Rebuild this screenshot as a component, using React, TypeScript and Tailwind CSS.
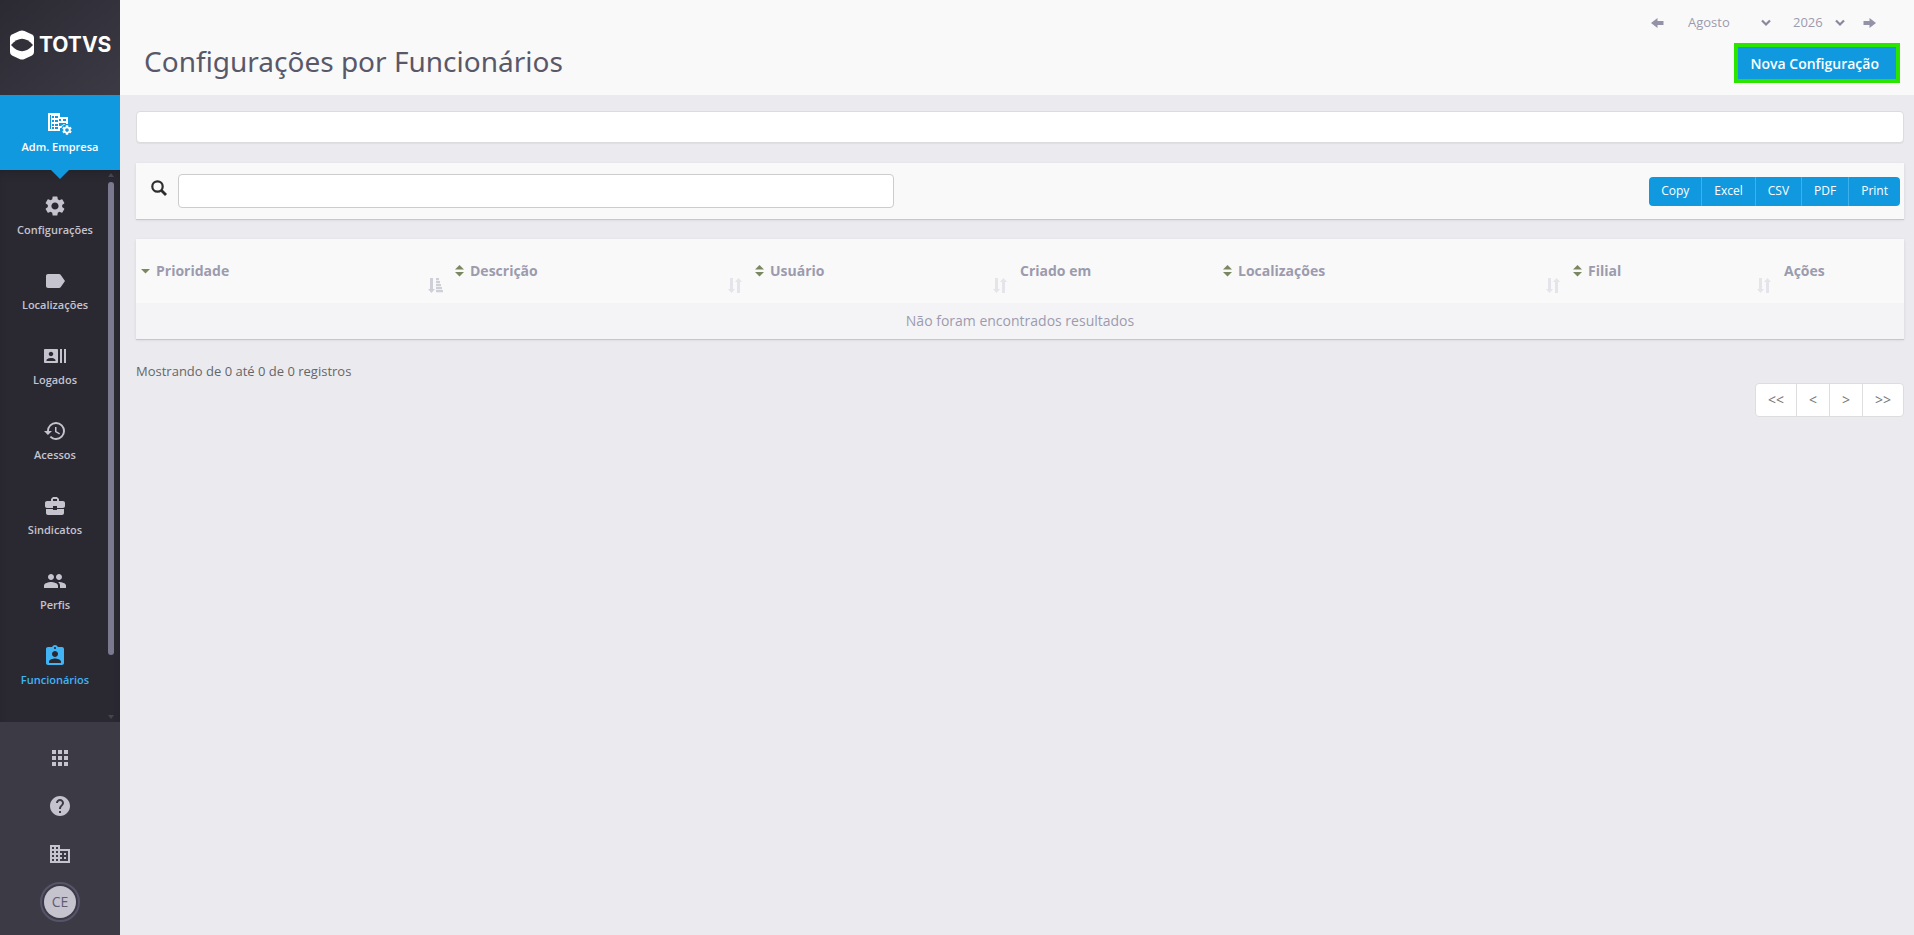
import {
  MdApps,
  MdAssignmentInd,
  MdBusinessCenter,
  MdHelp,
  MdHistory,
  MdLabel,
  MdPeople,
  MdRecentActors,
  MdSettings,
} from "react-icons/md";

const menu = [
  { label: "Configurações", icon: MdSettings },
  { label: "Localizações", icon: MdLabel },
  { label: "Logados", icon: MdRecentActors },
  { label: "Acessos", icon: MdHistory },
  { label: "Sindicatos", icon: MdBusinessCenter },
  { label: "Perfis", icon: MdPeople },
  { label: "Funcionários", icon: MdAssignmentInd, active: true },
];

const columns = [
  { label: "Prioridade", width: "w-[314px]", caret: "down", sort: "asc" },
  { label: "Descrição", width: "w-[300px]", caret: "both", sort: "both" },
  { label: "Usuário", width: "w-[265px]", caret: "both", sort: "both" },
  { label: "Criado em", width: "w-[203px]" },
  { label: "Localizações", width: "w-[350px]", caret: "both", sort: "both" },
  { label: "Filial", width: "w-[211px]", caret: "both", sort: "both" },
  { label: "Ações", width: "w-[125px]" },
];

const exportButtons = ["Copy", "Excel", "CSV", "PDF", "Print"];
const pages = ["<<", "<", ">", ">>"];

function LogoMark() {
  return (
    <svg width="24" height="30" viewBox="0 0 24 30" fill="none">
      <path
        d="M9.5 1Q12 0 14.5 1L22 4.5Q24 5.5 24 7.5V22Q24 24.5 22 25.5L14.5 29Q12 30 9.5 29L2 25.5Q0 24.5 0 22V7.5Q0 5.5 2 4.5Z"
        fill="#fff"
      />
      <path d="M1 15Q12 2.5 23 15Q12 27.5 1 15Z" fill="#32313a" />
    </svg>
  );
}

function CompanySettingsIcon() {
  return (
    <svg width="26" height="24" viewBox="0 0 26 24" fill="#fff">
      <path
        fillRule="evenodd"
        d="M1 2h12v4h8v7h-2l-4 3v1h-2v3H1zM3 4h1v14H3zM5 5h2v2H5zM8 5h3v2H8zM5 9h2v2H5zM8 9h3v2H8zM5 13h2v2H5zM8 13h3v2H8zM5 16h2v2H5zM8 16h3v2H8zM12 8h2v2h-2zM16 8h3v2h-3zM12 12h7v1h-2l-3 2h-2z"
      />
      <circle cx="20" cy="19" r="6" fill="#1199df" />
      <MdSettings x={14} y={13} size={12} />
    </svg>
  );
}

function BuildingIcon() {
  return (
    <svg width="24" height="24" viewBox="0 0 24 24">
      <path
        fillRule="evenodd"
        fill="currentColor"
        d="M2 3h10v4h10v14H2zM4 5h2v2H4zM8 5h2v2H8zM4 9h2v2H4zM8 9h2v2H8zM4 13h2v2H4zM8 13h2v2H8zM4 17h2v2H4zM8 17h2v2H8zM12 9v2h2v2h-2v2h2v2h-2v2h8V9zM16 11h2v2h-2zM16 15h2v2h-2z"
      />
    </svg>
  );
}

function Arrow({ right = false }: { right?: boolean }) {
  return (
    <svg width="13" height="10" viewBox="0 0 13 10" className={right ? "rotate-180" : ""}>
      <path d="M0 5L6.5 0V3H12.5V7H6.5V10Z" fill="#9492a8" />
    </svg>
  );
}

function Chevron() {
  return (
    <svg
      width="10"
      height="8"
      viewBox="0 0 10 8"
      className="pointer-events-none absolute right-0 top-1/2 -translate-y-1/2"
    >
      <path d="M1 1.5L5 5.5L9 1.5" fill="none" stroke="#8a889c" strokeWidth="2.2" />
    </svg>
  );
}

function Caret({ type }: { type: string }) {
  return (
    <svg width="9" height="12" viewBox="0 0 9 12">
      {type === "both" && <path d="M4.5 0L9 4.5H0Z" fill="#7b8760" />}
      {type === "both" ? (
        <path d="M0 7H9L4.5 11.5Z" fill="#7b8760" />
      ) : (
        <path d="M0 4H9L4.5 8.5Z" fill="#7b8760" />
      )}
    </svg>
  );
}

function SortIcon({ type }: { type: string }) {
  return (
    <svg width="15" height="15" viewBox="0 0 15 15" className="absolute bottom-2.5 right-[7px]">
      {type === "asc" ? (
        <path
          d="M2 0h3v11h2L3.5 15L0 11h2zM8 0h3v2.3H8zM8 3h4v2.3H8zM8 6h5v2.3H8zM8 9h6v2.3H8zM8 12h7v2.3H8z"
          fill="#cfcfd8"
        />
      ) : (
        <path d="M2 0h3v11h2L3.500 15L0 11h2zM9 15h3V4h2L10.500 0L7 4h2z" fill="#e4e4ea" />
      )}
    </svg>
  );
}

export default function App() {
  return (
    <div className="flex min-h-screen bg-[#ebebef] font-['Open_Sans',sans-serif] text-[#9c9bae]">
      <aside className="flex w-[120px] shrink-0 flex-col bg-[#3c3b45]">
        <div className="flex h-[95px] items-center gap-[5px] bg-linear-to-br from-[#2b2a33] to-[#3c3b45] pb-1.5 pl-2.5">
          <LogoMark />
          <span className="font-['Inter',sans-serif] text-[21px] font-bold leading-6 text-white">
            TOTVS
          </span>
        </div>

        <a
          href="#empresa"
          className="relative flex h-[75px] flex-col items-center gap-1 bg-[#1199df] pt-4 text-white"
        >
          <CompanySettingsIcon />
          <span className="text-[11px] font-semibold leading-4">Adm. Empresa</span>
          <svg width="18" height="9" viewBox="0 0 18 9" className="absolute top-full z-10">
            <path d="M0 0H18L9 9Z" fill="#1199df" />
          </svg>
        </a>

        <div className="flex flex-1 bg-[#2a2932] shadow-[inset_0_6px_8px_-4px_#22212a]">
          <nav className="flex-1 pt-6">
            {menu.map(({ label, icon: Icon, active }) => (
              <a
                key={label}
                href={"#" + label}
                className={
                  "flex h-[75px] flex-col items-center gap-1 pl-0.5 " +
                  (active ? "text-[#40b4f5]" : "text-[#c4c3ce]")
                }
              >
                <Icon size={24} />
                <span className="text-[11px] font-semibold leading-4">{label}</span>
              </a>
            ))}
          </nav>
          <div className="mr-1.5 flex w-1.5 flex-col items-center justify-between py-[3px]">
            <svg width="6" height="4" viewBox="0 0 6 4">
              <path d="M0 4L3 0L6 4Z" fill="#454451" />
            </svg>
            <div className="mb-auto mt-[5px] h-[473px] w-1.5 rounded-full bg-[#7b7990]" />
            <svg width="6" height="4" viewBox="0 0 6 4">
              <path d="M0 0H6L3 4Z" fill="#454451" />
            </svg>
          </div>
        </div>

        <div className="flex h-[213px] flex-col items-center gap-6 pt-6 text-[#c4c3ce]">
          <button aria-label="Aplicativos">
            <MdApps size={24} />
          </button>
          <button aria-label="Ajuda">
            <MdHelp size={24} />
          </button>
          <button aria-label="Empresa">
            <BuildingIcon />
          </button>
          <button className="-mt-2 flex size-10 items-center justify-center rounded-full border-2 border-[#56546a] text-sm">
            <span className="flex size-8 items-center justify-center rounded-full bg-[#c4c3ce] text-[#5f5d74]">
              CE
            </span>
          </button>
        </div>
      </aside>

      <div className="min-w-0 flex-1">
        <header className="flex h-[95px] justify-between bg-[#f9f9f9] pl-6 pr-3.5">
          <h1 className="pt-10 font-['Noto_Sans',sans-serif] text-[28px] leading-[42px] text-[#595869]">
            Configurações por Funcionários
          </h1>
          <div className="flex flex-col items-end">
            <div className="flex h-[43px] items-center pr-6 pt-0.5 text-[13px]">
              <button aria-label="Mês anterior">
                <Arrow />
              </button>
              <div className="relative ml-6">
                <select aria-label="Mês" className="w-[83px] appearance-none bg-transparent">
                  <option>Agosto</option>
                </select>
                <Chevron />
              </div>
              <div className="relative ml-[22px]">
                <select aria-label="Ano" className="w-[52px] appearance-none bg-transparent">
                  <option>2026</option>
                </select>
                <Chevron />
              </div>
              <button aria-label="Próximo mês" className="ml-[18px]">
                <Arrow right />
              </button>
            </div>
            <button className="h-10 border-4 border-[#29e500] bg-[#1199df] pl-[13px] pr-[17px] pt-0.5 text-sm font-semibold text-white">
              Nova Configuração
            </button>
          </div>
        </header>

        <main className="pl-4 pr-2.5 pt-4">
          <input
            aria-label="Filtro"
            className="block h-8 w-full rounded border border-[#dcdcdf] bg-white px-3 shadow-[0_1px_1px_#0000000d]"
          />

          <section className="mt-5 flex h-14 items-center justify-between bg-[#f9f9f9] pl-[15px] pr-1 shadow-[0_1px_0_#c6c5d1,0_1px_3px_#0000001a]">
            <label className="flex items-center gap-[11px]">
              <svg
                width="16"
                height="16"
                viewBox="0 0 16 16"
                fill="none"
                stroke="#2d2d2d"
                className="mb-1.5"
              >
                <circle cx="6.5" cy="6.5" r="5.2" strokeWidth="2.2" />
                <path d="M10.5 10.5L15 15" strokeWidth="2.8" />
              </svg>
              <input
                aria-label="Pesquisar"
                className="h-[34px] w-[716px] rounded border border-[#ccc] bg-white px-3 text-sm"
              />
            </label>
            <div className="flex divide-x divide-[#3db0ef] overflow-hidden rounded bg-[#1199df] text-xs text-white">
              {exportButtons.map((label) => (
                <button key={label} className="h-[29px] px-3">
                  {label}
                </button>
              ))}
            </div>
          </section>

          <table className="mt-5 w-full table-fixed text-left text-sm shadow-[0_1px_0_#c6c5d1,0_1px_3px_#0000001a]">
            <thead>
              <tr className="h-16 bg-[#f9f9f9]">
                {columns.map(({ label, width, caret, sort }) => (
                  <th key={label} className={"relative px-[5px] font-bold " + width}>
                    <span className="flex items-center gap-1.5">
                      {caret && <Caret type={caret} />}
                      {label}
                    </span>
                    {sort && <SortIcon type={sort} />}
                  </th>
                ))}
              </tr>
            </thead>
            <tbody>
              <tr className="h-9 bg-[#f4f4f6]">
                <td colSpan={7} className="text-center">
                  Não foram encontrados resultados
                </td>
              </tr>
            </tbody>
          </table>

          <p className="mt-5 text-[13px] leading-6 text-[#666]">
            Mostrando de 0 até 0 de 0 registros
          </p>
          <div className="flex justify-end">
            <div className="flex divide-x divide-[#ddd] rounded border border-[#ddd] bg-white text-sm text-[#777]">
              {pages.map((page) => (
                <button key={page} className="h-8 px-3">
                  {page}
                </button>
              ))}
            </div>
          </div>
        </main>
      </div>
    </div>
  );
}
